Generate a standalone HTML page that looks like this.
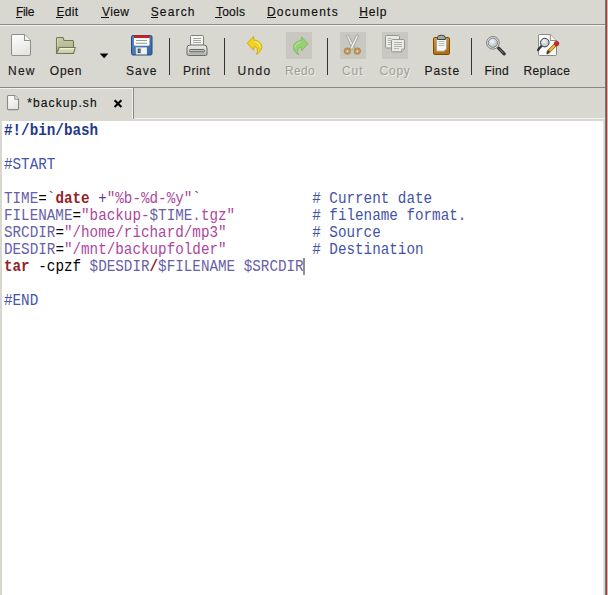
<!DOCTYPE html>
<html><head><meta charset="utf-8">
<style>
html,body{margin:0;padding:0;}
body{width:608px;height:595px;overflow:hidden;position:relative;background:#d8d7d0;font-family:"Liberation Sans",sans-serif;}
.a{position:absolute;}
.m{position:absolute;-webkit-text-stroke:0.15px currentColor;top:2px;font-size:12.0px;line-height:20px;color:#101010;white-space:nowrap;}
.u{position:absolute;height:1px;top:17px;background:#101010;}
.t{position:absolute;-webkit-text-stroke:0.15px currentColor;top:61px;font-size:12.0px;line-height:20px;color:#1a1a1a;white-space:nowrap;}
.dis{color:#a09f95;-webkit-text-stroke:0;text-shadow:1px 1px 0 #eeeee8;}
.sep{position:absolute;top:38px;width:1px;height:37px;background:#333;}
.box{position:absolute;top:32px;width:26px;height:27px;background:#c8c7c0;}
#ed{position:absolute;left:2px;top:121px;width:601px;height:474px;background:#fff;}
.ln{position:absolute;left:4px;transform:scaleX(0.8646);transform-origin:0 0;font-family:"Liberation Mono",monospace;font-size:16.5px;letter-spacing:0px;line-height:17px;white-space:pre;color:#000;}
.c{color:#4453a6;}
.v{color:#6660a8;}
.k{color:#922226;font-weight:bold;}
.s{color:#ad469d;}
.p{color:#6a3a98;}
.sb{color:#24378a;font-weight:bold;}
</style></head><body>
<div class="m" style="left:16.0px;letter-spacing:-0.33px">File</div><div class="u" style="left:16px;width:6px"></div>
<div class="m" style="left:56.4px;letter-spacing:0.33px">Edit</div><div class="u" style="left:56px;width:7px"></div>
<div class="m" style="left:102.1px;letter-spacing:0.37px">View</div><div class="u" style="left:101px;width:8px"></div>
<div class="m" style="left:150.7px;letter-spacing:1.16px">Search</div><div class="u" style="left:151px;width:7px"></div>
<div class="m" style="left:215.9px;letter-spacing:0.25px">Tools</div><div class="u" style="left:215px;width:7px"></div>
<div class="m" style="left:266.9px;letter-spacing:1.26px">Documents</div><div class="u" style="left:267px;width:9px"></div>
<div class="m" style="left:359.3px;letter-spacing:0.83px">Help</div><div class="u" style="left:359px;width:9px"></div>
<div class="a" style="left:0;top:24px;width:605px;height:1px;background:#8e8d86"></div>
<div class="a" style="left:0;top:25px;width:605px;height:1px;background:#f2f2ee"></div>
<div class="t" style="left:8.0px;letter-spacing:1.25px">New</div>
<div class="t" style="left:49.8px;letter-spacing:0.77px">Open</div>
<div class="t" style="left:125.9px;letter-spacing:1.10px">Save</div>
<div class="t" style="left:183.1px;letter-spacing:0.50px">Print</div>
<div class="t" style="left:237.6px;letter-spacing:1.30px">Undo</div>
<div class="t dis" style="left:284.9px;letter-spacing:0.33px">Redo</div>
<div class="t dis" style="left:341.9px;letter-spacing:0.95px">Cut</div>
<div class="t dis" style="left:379.5px;letter-spacing:0.77px">Copy</div>
<div class="t" style="left:424.4px;letter-spacing:1.00px">Paste</div>
<div class="t" style="left:484.4px;letter-spacing:0.33px">Find</div>
<div class="t" style="left:523.5px;letter-spacing:0.38px">Replace</div>
<div class="sep" style="left:169px"></div>
<div class="sep" style="left:224px"></div>
<div class="sep" style="left:327px"></div>
<div class="sep" style="left:471px"></div>
<div class="box" style="left:286px"></div>
<div class="box" style="left:340px"></div>
<div class="box" style="left:382px"></div>
<div class="a" style="left:0;top:87px;width:605px;height:1px;background:#8a8982"></div>
<div class="a" style="left:0;top:88px;width:133px;height:1px;background:#f2f2ee"></div>
<div class="a" style="left:132px;top:88px;width:1px;height:31px;background:#eeeeea"></div>
<div class="a" style="left:133px;top:88px;width:1px;height:31px;background:#8a8982"></div>
<div class="a" style="left:134px;top:118px;width:471px;height:1px;background:#f2f2ee"></div>
<div class="a" style="left:27.2px;top:93px;font-size:12.0px;line-height:20px;letter-spacing:1.12px;-webkit-text-stroke:0.15px currentColor;color:#101010;white-space:nowrap">*backup.sh</div>
<div id="ed"></div>
<div class="a" style="left:603px;top:121px;width:1px;height:474px;background:#e4e4de"></div>
<div class="a" style="left:605px;top:0;width:1px;height:595px;background:#6f7d74"></div>
<div class="a" style="left:606px;top:0;width:1px;height:595px;background:#d02a2a"></div>
<div class="a" style="left:607px;top:0;width:1px;height:595px;background:#b3c0c0"></div>
<div class="ln" style="top:122px"><span class="sb">#!/bin/bash</span></div>
<div class="ln" style="top:156px"><span class="c">#START</span></div>
<div class="ln" style="top:190px"><span class="v">TIME</span>=<span class="p">`</span><span class="k">date</span> <span class="p">+</span><span class="s">"%b-%d-%y"</span><span class="p">`</span>             <span class="c"># Current date</span></div>
<div class="ln" style="top:207px"><span class="v">FILENAME</span>=<span class="s">"backup-</span><span class="v">$TIME</span><span class="s">.tgz"</span>         <span class="c"># filename format.</span></div>
<div class="ln" style="top:224px"><span class="v">SRCDIR</span>=<span class="s">"/home/richard/mp3"</span>          <span class="c"># Source</span></div>
<div class="ln" style="top:241px"><span class="v">DESDIR</span>=<span class="s">"/mnt/backupfolder"</span>          <span class="c"># Destination</span></div>
<div class="ln" style="top:258px"><span class="k">tar</span> -cpzf <span class="v">$DESDIR</span><span class="k">/</span><span class="v">$FILENAME</span> <span class="v">$SRCDIR</span></div>
<div class="ln" style="top:292px"><span class="c">#END</span></div>
<div class="a" style="left:303px;top:258px;width:2px;height:17px;background:#8e8e8c"></div>
<svg class="a" style="left:0;top:0" width="608" height="595" viewBox="0 0 608 595">
<defs>
<linearGradient id="gpage" x1="0" y1="0" x2="0.4" y2="1"><stop offset="0" stop-color="#ffffff"/><stop offset="1" stop-color="#e6e6e3"/></linearGradient>
<linearGradient id="gfold" x1="0" y1="0" x2="0" y2="1"><stop offset="0" stop-color="#c9cda9"/><stop offset="1" stop-color="#a6ab85"/></linearGradient>
<linearGradient id="gfront" x1="0" y1="0" x2="0" y2="1"><stop offset="0" stop-color="#e2e6c4"/><stop offset="1" stop-color="#c3c8a2"/></linearGradient>
<linearGradient id="gblue" x1="0" y1="0" x2="1" y2="1"><stop offset="0" stop-color="#5b87c5"/><stop offset="1" stop-color="#3465a4"/></linearGradient>
<linearGradient id="gprint" x1="0" y1="0" x2="0" y2="1"><stop offset="0" stop-color="#eeeeec"/><stop offset="1" stop-color="#babdb6"/></linearGradient>
<linearGradient id="gboard" x1="0" y1="0" x2="0.3" y2="1"><stop offset="0" stop-color="#d99a3a"/><stop offset="1" stop-color="#b06e12"/></linearGradient>
<radialGradient id="glens" cx="0.4" cy="0.35" r="0.7"><stop offset="0" stop-color="#f4f7fa"/><stop offset="1" stop-color="#a9b8c4"/></radialGradient>
</defs>
<!-- New -->
<path d="M11.5,36 Q11.5,34.5 13,34.5 L24.5,34.5 L30.5,40.5 L30.5,54 Q30.5,55.5 29,55.5 L13,55.5 Q11.5,55.5 11.5,54 Z" fill="url(#gpage)" stroke="#8f908b" stroke-width="1.05"/>
<path d="M24.5,34.5 L24.5,40.5 L30.5,40.5" fill="#f6f6f4" stroke="#8f908b" stroke-width="1.05"/>
<!-- Open -->
<path d="M56.5,38.5 Q56.5,37.5 57.5,37.5 L63,37.5 L64,40.5 L72.5,40.5 Q73.5,40.5 73.5,41.5 L73.5,53.5 L56.5,53.5 Z" fill="url(#gfold)" stroke="#72775b" stroke-width="1.05"/>
<path d="M59.2,47.5 L75.3,47.5 L73.5,53.5 L56.5,53.5 Z" fill="url(#gfront)" stroke="#72775b" stroke-width="1.05"/>
<path d="M60.3,48.6 L74.2,48.6" stroke="#f4f6e8" stroke-width="0.9"/><path d="M57.6,38.6 L57.6,46.5" stroke="#dfe3c8" stroke-width="0.8"/>
<!-- dropdown -->
<path d="M99.7,53.4 L108.4,53.4 L104.1,58.3 Z" fill="#000"/>
<!-- Save -->
<rect x="131.5" y="35.5" width="20.5" height="19.5" rx="1.5" fill="url(#gblue)" stroke="#204a87" stroke-width="1"/>
<rect x="134" y="35.5" width="15.5" height="2.6" fill="#d41c1c"/>
<path d="M134,38 L149.5,38 L149.5,44.5 Q149.5,45.8 148.2,45.8 L135.3,45.8 Q134,45.8 134,44.5 Z" fill="#fbfbfb"/>
<rect x="136" y="40" width="11" height="1" fill="#9a9c98"/>
<rect x="136" y="42.8" width="11" height="1" fill="#9a9c98"/>
<rect x="135.8" y="47.3" width="11.2" height="7.2" fill="#dfe0dd"/>
<rect x="141.5" y="48" width="5" height="6" fill="#f2f2f0"/>
<rect x="137.8" y="48.7" width="2.7" height="4.2" fill="#2e3436"/>
<rect x="138.6" y="49.5" width="1.1" height="2.6" fill="#729fcf"/>
<!-- Print -->
<rect x="190.5" y="35.5" width="13" height="10.5" rx="1" fill="#f5f5f3" stroke="#7d7f7a" stroke-width="1"/>
<rect x="193" y="38" width="8" height="0.9" fill="#9b9d98"/>
<rect x="193" y="40" width="8" height="0.9" fill="#9b9d98"/>
<rect x="193" y="42" width="8" height="0.9" fill="#9b9d98"/>
<path d="M187,48 Q187,45 190,45 L204,45 Q207,45 207,48 L207,54 Q207,55.5 205.5,55.5 L188.5,55.5 Q187,55.5 187,54 Z" fill="url(#gprint)" stroke="#696b67" stroke-width="1"/>
<rect x="189.5" y="49.6" width="15" height="2.2" rx="1" fill="#c9cbc6" stroke="#50524e" stroke-width="0.9"/>
<rect x="188.5" y="53.3" width="17" height="1" fill="#a8aaa5"/>
<!-- Undo -->
<path d="M247.3,43.3 L253.6,36.4 L254.1,40.2 C258.6,40.4 262.2,43.5 261.7,47.5 C261.3,50.6 258.8,53.1 256.3,54.3 C257.5,52.4 257.9,50.4 257.2,48.7 C256.6,47.2 255.3,46.7 254,46.8 L253.6,50.2 Z" fill="#f0d31e" stroke="#c9a806" stroke-width="0.9"/>
<path d="M254.4,41.5 C257.4,41.9 260,44.1 260.2,47.1" fill="none" stroke="#faf0a0" stroke-width="0.9"/>
<g opacity="0.82"><!-- Redo -->
<path d="M307.9,43.8 L301.6,36.9 L301.1,40.7 C296.6,40.9 293,44 293.5,48 C293.9,51.1 296.4,53.6 298.9,54.8 C297.7,52.9 297.3,50.9 298,49.2 C298.6,47.7 299.9,47.2 301.2,47.3 L301.6,50.7 Z" fill="#8cd462" stroke="#68b844" stroke-width="0.9"/>
<path d="M300.8,42 C297.8,42.4 295.2,44.6 295,47.6" fill="none" stroke="#c4ecae" stroke-width="0.9"/>
<!-- Cut -->
<path d="M346.4,35.6 Q347.6,34.6 348.6,35.4 L355.2,48.6 L352.6,49.4 Z" fill="#f6f6f4" stroke="#8d8f8a" stroke-width="0.8"/>
<path d="M358.6,35.6 Q357.4,34.6 356.4,35.4 L349.8,48.6 L352.4,49.4 Z" fill="#f6f6f4" stroke="#8d8f8a" stroke-width="0.8"/>
<ellipse cx="347.4" cy="51.1" rx="3.3" ry="3.3" fill="#c48d3c" stroke="#9a6a20" stroke-width="0.6"/>
<ellipse cx="357.3" cy="51.1" rx="3.3" ry="3.3" fill="#c48d3c" stroke="#9a6a20" stroke-width="0.6"/>
<circle cx="347.4" cy="51.3" r="1" fill="#e8e4da"/>
<circle cx="357.3" cy="51.3" r="1" fill="#e8e4da"/>
<!-- Copy -->
<rect x="385.5" y="35.5" width="14" height="12.5" rx="1" fill="#f0f0ee" stroke="#8a8c87" stroke-width="1"/>
<rect x="388" y="38" width="3.5" height="0.8" fill="#a0a29d"/><rect x="388" y="40" width="3.5" height="0.8" fill="#a0a29d"/><rect x="388" y="42" width="3.5" height="0.8" fill="#a0a29d"/><rect x="388" y="44" width="3.5" height="0.8" fill="#a0a29d"/>
<path d="M391.5,40.5 Q391.5,39.5 392.5,39.5 L403.5,39.5 Q404.5,39.5 404.5,40.5 L404.5,49 L401.7,51.8 L392.5,51.8 Q391.5,51.8 391.5,50.8 Z" fill="#f2f2f0" stroke="#8a8c87" stroke-width="1"/><path d="M401.7,51.8 L401.7,49 L404.5,49" fill="#d6d7d3" stroke="#8a8c87" stroke-width="0.8"/>
<rect x="394" y="42" width="8" height="0.8" fill="#a0a29d"/><rect x="394" y="44" width="8" height="0.8" fill="#a0a29d"/><rect x="394" y="46" width="8" height="0.8" fill="#a0a29d"/><rect x="394" y="48" width="5" height="0.8" fill="#a0a29d"/>
</g>
<!-- Paste -->
<rect x="433.5" y="37.5" width="16" height="17" rx="1.2" fill="url(#gboard)" stroke="#7a4c06" stroke-width="1"/>
<path d="M436.5,38.5 L446.5,38.5 L446.5,49 L444,51.2 L436.5,51.2 Z" fill="#f7f7f5" stroke="#9a9c98" stroke-width="0.8"/>
<rect x="438.5" y="41" width="6" height="0.8" fill="#a6a8a3"/><rect x="438.5" y="43" width="6" height="0.8" fill="#a6a8a3"/><rect x="438.5" y="45" width="6" height="0.8" fill="#a6a8a3"/>
<path d="M437.5,39.5 L437.5,37.5 Q437.5,35.2 441.4,35.2 Q445.3,35.2 445.3,37.5 L445.3,39.5 Z" fill="#a6a8a3" stroke="#3e403c" stroke-width="1"/>
<!-- Find -->
<path d="M498.6,48.2 L504.2,53.8" stroke="#2e3436" stroke-width="3.2" stroke-linecap="round"/>
<path d="M499.3,48.9 L503.3,52.9" stroke="#888a85" stroke-width="0.9" stroke-linecap="round"/>
<circle cx="492.9" cy="42.8" r="6.3" fill="#e6e6e2" stroke="#7a7c77" stroke-width="1"/>
<circle cx="492.9" cy="42.8" r="4.6" fill="url(#glens)" stroke="#6d6f6a" stroke-width="0.8"/>
<!-- Replace -->
<path d="M538.5,35.5 Q538.5,34.5 539.5,34.5 L550.3,34.5 L556.5,40.5 L556.5,54.5 Q556.5,55.5 555.5,55.5 L539.5,55.5 Q538.5,55.5 538.5,54.5 Z" fill="#fbfbfa" stroke="#8a8b86" stroke-width="1"/>
<path d="M550.3,34.5 L550.3,40.5 L556.5,40.5" fill="#efefed" stroke="#8a8b86" stroke-width="1"/>
<path d="M541.4,46 L538,50" stroke="#2e3436" stroke-width="2.2" stroke-linecap="round"/>
<circle cx="544.8" cy="42.6" r="4.3" fill="url(#glens)" stroke="#3d3f3b" stroke-width="1"/>
<path d="M556.2,44 L548.4,51.8" stroke="#8f5902" stroke-width="3.4" stroke-linecap="round"/>
<path d="M556.2,44 L548.6,51.6" stroke="#f0b43c" stroke-width="2.2" stroke-linecap="round"/>
<circle cx="556.6" cy="43.6" r="2.3" fill="#cc2a2a" stroke="#8f1010" stroke-width="0.6"/>
<path d="M548.9,51.3 L547.3,53.2" stroke="#2e3436" stroke-width="1.8" stroke-linecap="round"/>
<!-- tab doc -->
<path d="M7.5,96.5 Q7.5,95.5 8.5,95.5 L14.8,95.5 L18.5,99.2 L18.5,108.8 Q18.5,109.6 17.7,109.6 L8.3,109.6 Q7.5,109.6 7.5,108.8 Z" fill="url(#gpage)" stroke="#8a8b86" stroke-width="1.1"/>
<path d="M14.8,95.5 L14.8,99.2 L18.5,99.2" fill="#f4f4f2" stroke="#8a8b86" stroke-width="1"/>
<!-- close x -->
<path d="M114.6,100.3 L121.4,107 M121.4,100.3 L114.6,107" stroke="#000" stroke-width="2.1"/>
</svg>
</body></html>
